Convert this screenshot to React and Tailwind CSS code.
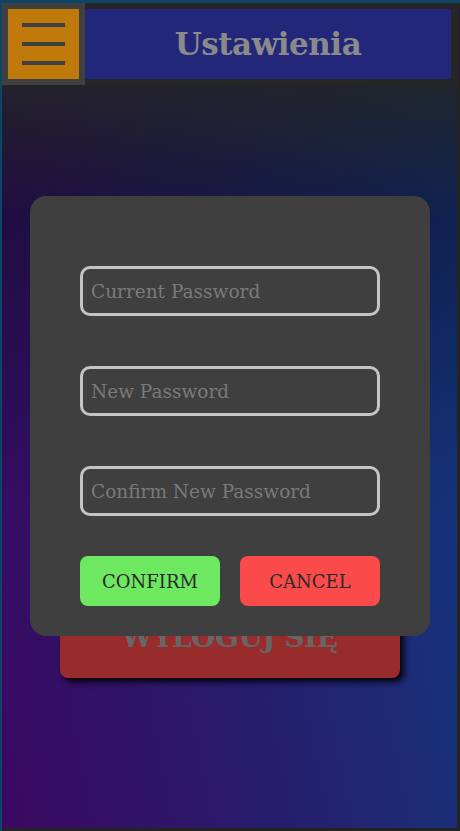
import React from 'react';

const font = { fontFamily: '"DejaVu Serif", "Liberation Serif", serif' };

const Field = ({ placeholder }) => (
    <input
        type="password"
        placeholder={placeholder}
        className="w-full h-[50px] rounded-[10px] border-[3px] border-[#c4c4c4] bg-transparent px-[8px] text-[18.5px] text-[#ccc] placeholder:text-[#7a7a7a] outline-none"
        style={font}
    />
);

const App = () => {
    return (
        <div className="h-screen w-full bg-[#0d4566] pl-[2px] pt-[3px]" style={font}>
            <div className="relative flex h-full flex-col bg-[#232323] pr-[3px] pb-[3px]">
                {/* header */}
                <div className="flex h-[82px] shrink-0">
                    <div className="w-[83px] bg-[#404040] p-[6px]">
                        <button className="flex h-full w-full flex-col items-center justify-center gap-[15px] bg-[#c07a0b]">
                            <span className="h-[4px] w-[43px] bg-[#3f3f3f]" />
                            <span className="h-[4px] w-[43px] bg-[#3f3f3f]" />
                            <span className="h-[4px] w-[43px] bg-[#3f3f3f]" />
                        </button>
                    </div>
                    <div className="flex-1 bg-[#262626] py-[6px] pr-[6px]">
                        <div className="flex h-full items-center justify-center bg-[#22277a]">
                            <h1 className="text-[31px] font-bold text-[#8a8a8a] tracking-[-0.5px]">Ustawienia</h1>
                        </div>
                    </div>
                </div>

                {/* content */}
                <div className="relative flex-1 overflow-hidden bg-[linear-gradient(78deg,#3b0862_0%,#25206e_50%,#103c84_100%)]">
                    <div className="flex flex-col items-center pt-[513px]">
                        <button className="h-[80px] w-[340px] rounded-[8px] bg-[#982c2c] text-[28px] font-bold text-[#666] shadow-[4px_4px_6px_rgba(0,0,0,0.9)] tracking-[-0.5px]">
                            WYLOGUJ SIĘ
                        </button>
                    </div>

                    {/* overlay */}
                    <div className="absolute inset-0 bg-[linear-gradient(to_bottom,rgba(35,35,35,0.88)_0%,rgba(10,5,20,0.45)_18%,rgba(0,0,0,0)_60%)]" />

                    {/* modal */}
                    <div className="absolute left-[28px] top-[111px] w-[400px] rounded-[16px] bg-[#3f3f3f] px-[50px] pt-[70px] pb-[30px]">
                        <div className="flex flex-col gap-[50px]">
                            <Field placeholder="Current Password" />
                            <Field placeholder="New Password" />
                            <Field placeholder="Confirm New Password" />
                        </div>
                        <div className="mt-[40px] flex gap-[20px]">
                            <button className="h-[50px] flex-1 rounded-[8px] bg-[#6ee761] text-[18px] text-[#2a2a2a]">
                                CONFIRM
                            </button>
                            <button className="h-[50px] flex-1 rounded-[8px] bg-[#fa4a4a] text-[18px] text-[#2a2a2a]">
                                CANCEL
                            </button>
                        </div>
                    </div>
                </div>
            </div>
        </div>
    );
};

export default App;
